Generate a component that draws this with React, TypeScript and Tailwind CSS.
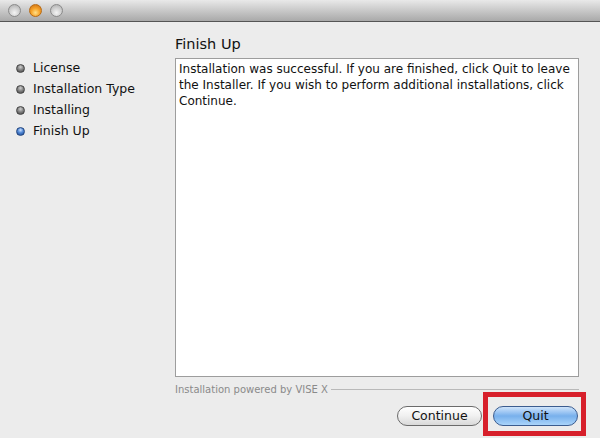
import React from 'react'

const steps = [
  { label: 'License', current: false },
  { label: 'Installation Type', current: false },
  { label: 'Installing', current: false },
  { label: 'Finish Up', current: true },
]

const message = [
  'Installation was successful. If you are finished, click Quit to leave',
  'the Installer. If you wish to perform additional installations, click',
  'Continue.',
]

function Bullet({ current }: { current: boolean }) {
  return (
    <span
      className={`inline-block w-[9px] h-[9px] rounded-full border ${
        current
          ? 'border-[#22457f] bg-[radial-gradient(circle_at_50%_30%,#cfe3ff_0%,#4f86d4_45%,#1a468f_100%)]'
          : 'border-[#444] bg-[radial-gradient(circle_at_50%_30%,#d0d0d0_0%,#7e7e7e_50%,#444_100%)]'
      }`}
    />
  )
}

function Light({ color }: { color: 'gray' | 'orange' }) {
  return (
    <span
      className={`inline-block w-[13px] h-[13px] rounded-full border ${
        color === 'orange'
          ? 'border-[#b86a12] bg-[radial-gradient(circle_at_50%_70%,#ffe08a_0%,#f7a42a_45%,#c86a10_100%)]'
          : 'border-[#8a8a8a] bg-[radial-gradient(circle_at_50%_70%,#f4f4f4_0%,#d0d0d0_50%,#a8a8a8_100%)]'
      }`}
    />
  )
}

export default function App() {
  return (
    <div
      className="relative w-[600px] h-[438px] flex flex-col bg-[#ececec] overflow-hidden"
      style={{ fontFamily: '"DejaVu Sans", "Liberation Sans", sans-serif' }}
    >
      {/* Title bar */}
      <div className="h-[22px] shrink-0 flex items-center gap-[8px] pl-[8px] bg-gradient-to-b from-[#e9e9e9] to-[#a9a9a9] border-b border-[#555]">
        <Light color="gray" />
        <Light color="orange" />
        <Light color="gray" />
      </div>

      <div className="flex flex-1">
        {/* Sidebar */}
        <div className="w-[175px] shrink-0 pt-[38px] pl-[16px] flex flex-col gap-[5px]">
          {steps.map((s) => (
            <div key={s.label} className="flex items-center gap-[8px] h-[16px] text-[12.5px] text-[#111]">
              <Bullet current={s.current} />
              <span>{s.label}</span>
            </div>
          ))}
        </div>

        {/* Content */}
        <div className="flex-1 flex flex-col pr-[21px] pt-[13px]">
          <h1 className="text-[14.5px] leading-[18px] text-[#111] mb-[5px]">Finish Up</h1>
          <div className="h-[319px] border border-[#9d9d9d] bg-white px-[3px] pt-[2px] text-[12px] leading-[16px] text-[#111]">
            {message.map((line) => (
              <div key={line} className="whitespace-nowrap">{line}</div>
            ))}
          </div>
          <div className="flex items-center gap-[3px] mt-[4px] h-[16px]">
            <span className="text-[10px] text-[#8a8a8a]">Installation powered by VISE X</span>
            <span className="flex-1 h-px bg-[#b9b9b9]" />
          </div>
          <div className="flex justify-end gap-[11px] mt-[9px] pr-px">
            <button className="w-[85px] h-[20px] rounded-full border border-[#6b6b6b] bg-gradient-to-b from-[#ffffff] via-[#f0f0f0] to-[#d9d9d9] text-[12.5px] leading-none text-[#111]">
              Continue
            </button>
            <button className="w-[85px] h-[20px] rounded-full border border-[#3b5c8f] bg-gradient-to-b from-[#cfe4fb] via-[#78b0ec] to-[#a9d4fa] text-[12.5px] leading-none text-[#111]">
              Quit
            </button>
          </div>
        </div>
      </div>

      {/* Annotation highlight */}
      <div className="absolute left-[483px] top-[392px] w-[103px] h-[44px] border-[5px] border-[#d7202b]" />
    </div>
  )
}
